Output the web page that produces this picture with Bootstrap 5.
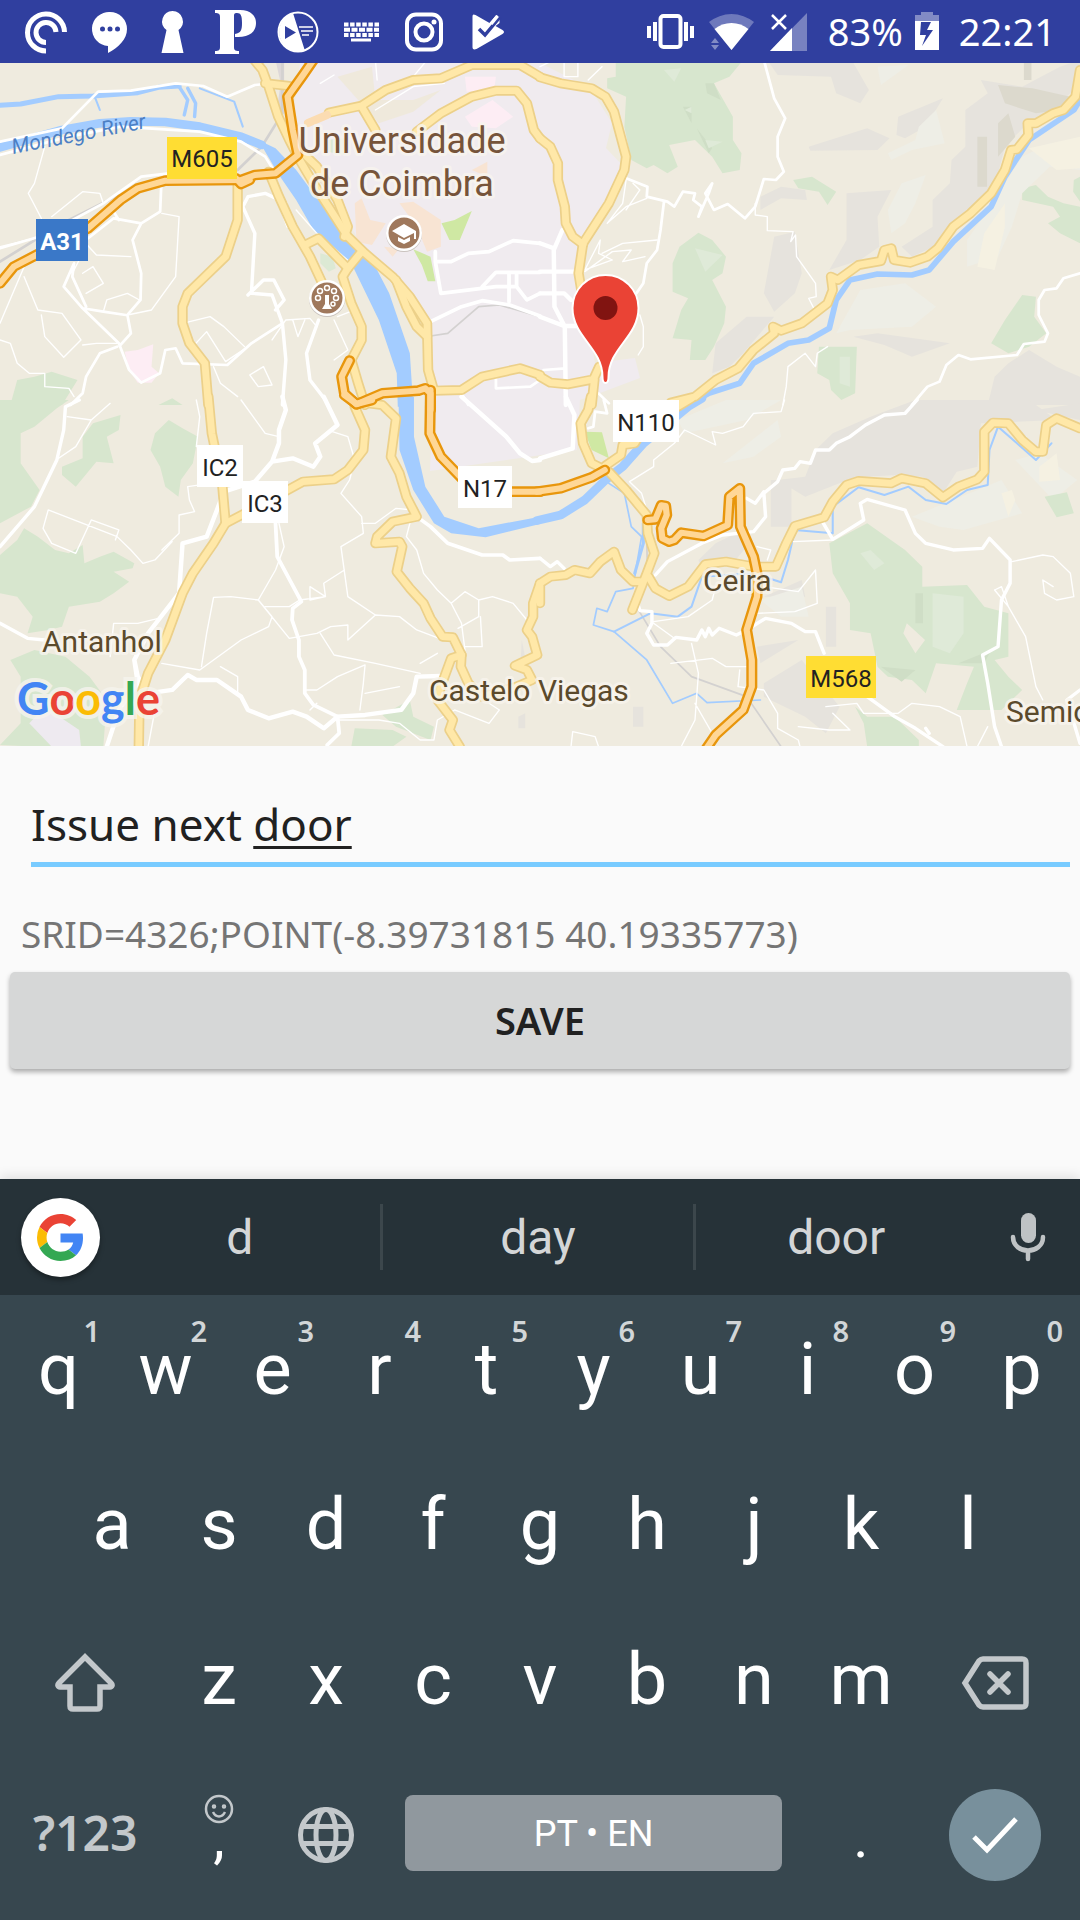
<!DOCTYPE html>
<html lang="en">
<head>
<meta charset="utf-8">
<meta name="viewport" content="width=device-width, initial-scale=1">
<title>New issue</title>
<link href="https://cdn.jsdelivr.net/npm/bootstrap@5.3.0/dist/css/bootstrap.min.css" rel="stylesheet">
<script src="https://cdn.jsdelivr.net/npm/bootstrap@5.3.0/dist/js/bootstrap.bundle.min.js"></script>
<style>
body{background:#fafafa;color:#212121;font-family:"Noto Sans","Open Sans",sans-serif}
.statusbar{background:#303f9f;height:63px;padding:0 24px;color:#fff;font-size:38px;line-height:63px}
.statusbar svg{display:block;fill:#fff}
.map{display:block;width:100%;height:auto;font-family:Roboto,sans-serif}
.issue-form{padding:40px 10px 0}
.issue-field{margin-left:21px;border-bottom:5px solid #78cbff;position:relative}
.issue-field input{display:block;width:100%;border:0;outline:0;background:transparent;padding:0;font-size:44px;line-height:76px;color:#212121}
.spell{position:absolute;left:0;top:0;font-size:44px;line-height:76px;color:transparent;pointer-events:none;white-space:pre}
.spell span{text-decoration:underline 3px #212121;text-underline-offset:5px}
.coords{margin:42px 11px 13px;font-size:37px;line-height:50px;color:#757575}
.btn-save{background:#d6d7d7;color:#212121;border:0;border-radius:5px;height:97px;font-size:38px;font-weight:600;box-shadow:0 3px 5px rgba(0,0,0,.32)}
.keyboard{background:#37474f;font-family:Roboto,sans-serif;box-shadow:0 -2px 12px rgba(0,0,0,.12)}
.suggestions{background:#263238;height:116px}
.suggestions button,.keys button{border:0;background:transparent;padding:0}
.glogo{width:79px;height:79px;margin-left:21px;background:#fff!important;border-radius:50%;box-shadow:0 3px 5px rgba(0,0,0,.35);display:grid;place-items:center}
.word{flex:9 1 0;color:#d4d6d7;font-size:48px;line-height:64px;padding-top:2px!important}
.word.main{flex:10 1 0}
.word+.word{border-left:3px solid #3c474c!important}
.mic{width:104px;display:grid;place-items:center}
.keys{padding:0 5px 5px}
.keyrow{height:155px}
.keys button{flex:2 1 0;min-width:0;height:155px;padding-bottom:6px;color:#fff;font-size:72px;line-height:1;display:flex;align-items:center;justify-content:center;position:relative}
.keys .half{flex:1 1 0}
.keys .wide{flex:3 1 0;color:#c3c8cb}
.keys .space{flex:8 1 0;padding-bottom:10px}
.space span{display:block;width:88%;height:76px;border-radius:8px;background:#90989e;font-size:36px;line-height:78px}
.hint{position:absolute;left:50%;top:18px;margin-left:25px;font:600 29px/36px "Noto Sans",sans-serif;color:#d2d6d8}
.keys .sym{font:600 48px "Noto Sans",sans-serif;padding-bottom:10px}
.keys .low{padding-bottom:0}
.keys .punct{padding-bottom:2px;font-size:58px}
.enter{width:92px;height:92px;border-radius:50%;background:#78909c;display:grid;place-items:center}
.smile{position:absolute;left:50%;top:34px;margin-left:-15px}
/* map drawing */
.map path,.map polyline{stroke-linejoin:round;stroke-linecap:round}
.ln path{fill:none}
.thin{stroke:#fff;stroke-width:4}
.mid{stroke:#fff;stroke-width:8}
.ycase{stroke:#ecd089;stroke-width:30}
.yfill{stroke:#ffe8a8;stroke-width:20}
.ocase{stroke:#e8960c;stroke-width:32}
.ofill{stroke:#ffd796;stroke-width:18}
.river{stroke:#a3ccff}
.river .bank{fill:#a3ccff;stroke:none}
.place{font-size:30px;fill:#5b4a2c;stroke:#f8f5ee;stroke-width:6px;stroke-opacity:.8;paint-order:stroke;stroke-linejoin:round}
.uni{font-size:36px;fill:#76543a;text-anchor:middle}
.shield{font-size:24px;fill:#222;text-anchor:middle}
</style>
</head>
<body class="min-vh-100 d-flex flex-column">
<header class="statusbar d-flex align-items-center justify-content-between">
  <svg width="484" height="63" viewBox="24 0 484 63" role="img" aria-label="Notifications">
    <path d="M46 51A18.500 18.500 0 1 1 64.500 32" fill="none" stroke="#fff" stroke-width="5"/>
    <path d="M46 42.500A10 10 0 1 1 56 32" fill="none" stroke="#fff" stroke-width="5"/>
    <path d="M110 12a17 17 0 0 1 17 17c0 10-8 18-19 24v-7a17 17 0 0 1 2-34z"/>
    <g fill="#303f9f"><circle cx="102.500" cy="29" r="2.500"/><circle cx="110" cy="29" r="2.500"/><circle cx="117.500" cy="29" r="2.500"/></g>
    <path d="M172.500 11a10.500 10.500 0 0 1 6 19l5 23h-22l5-23a10.500 10.500 0 0 1 6-19z"/>
    <path fill-rule="evenodd" d="M215 10h25c11 0 16 6 16 13 0 9-7 15-21 14v-3c6-1 7-4 7-11s-1-10-5-10c-3 0-3 1-3 4v30c0 3 1 4 5 4v3h-24v-3c4 0 5-1 5-4V17c0-3-1-4-5-4z"/>
    <circle cx="298" cy="32" r="19.500" fill="none" stroke="#fff" stroke-width="2"/>
    <path d="M293 13l12 38a19.500 19.500 0 1 1-12-38z"/><path d="M285 26v13l11-6.500z" fill="#303f9f"/>
    <path d="M299 27h14M301 31h12M302 35h7" stroke="#fff" stroke-width="1.500"/>
    <path d="M344 24.500h35M344 35h35" stroke="#fff" stroke-width="4" stroke-dasharray="4.500 1.600"/><path d="M344 29.700h35" stroke="#fff" stroke-width="4" stroke-dasharray="6 1.500"/><path d="M351 40h20" stroke="#fff" stroke-width="3"/>
    <g fill="none" stroke="#fff"><rect x="407" y="14.500" width="34" height="35" rx="9" stroke-width="4"/><circle cx="424" cy="32" r="8.500" stroke-width="4"/></g><circle cx="434" cy="22" r="2.500"/>
    <path d="M472.500 17c0-3 1-3 3-2l14 8 7-8 3 2v6l-4 3 7 4c2 1 2 3 0 4l-26 15c-3 1-4 0-4-2z"/><path d="M479 29l6 6 15-18" fill="none" stroke="#303f9f" stroke-width="3.500"/><path d="M491 24l6.500-8" stroke="#fff" stroke-width="3.500"/>
  </svg>
  <div class="d-flex align-items-center">
  <svg width="163" height="63" viewBox="645 0 163 63" role="img" aria-label="Vibrate, wireless and mobile signal">
    <rect x="660.500" y="16" width="20" height="31" rx="3" fill="none" stroke="#fff" stroke-width="4"/>
    <path d="M647 26h4v12h-4zM653 22h4v19h-4zM684 22h4v19h-4zM690 26h4v12h-4z"/>
    <path d="M709 22a36 36 0 0 1 45 0L731.500 50z" opacity=".3"/><path d="M714.500 29a27 27 0 0 1 34 0L731.500 50z"/>
    <path d="M711 43l4-5 4 5zM711 45l4 5 4-5z" opacity=".4"/>
    <path d="M770 51l37-38v38z" opacity=".35"/><path d="M770 51l22-23v23z"/><path d="M772 15l14 14M786 15l-14 14" stroke="#fff" stroke-width="2.500"/>
  </svg>
  <span class="ms-3 ps-1">83%</span>
  <svg class="ms-2 me-3" width="32" height="63" viewBox="0 0 32 63" role="img" aria-label="Charging"><path d="M4 15h6v-3h12v3h6v7H4z" opacity=".4"/><path fill-rule="evenodd" d="M4 21h24v29H4zM10 22l-1 13h6l-4 11 11-16h-6l4-8z"/></svg>
  <span>22:21</span>
  </div>
</header>

<svg class="map" viewBox="0 0 1080 683" role="img" aria-label="Map of Coimbra">
<rect width="1080" height="683" fill="#efebdf"/>
<defs>
<g id="yellow">
 <g transform="translate(0 -3) scale(.3444 .3333)">
  <path d="M738 0L762 30L780 80L808 170L840 240L870 300L910 370L960 450L1010 530L1060 580L1140 650L1190 710L1240 790L1243 930L1260 992L1340 990L1400 950L1510 925L1568 945"/>
  <path d="M770 70L840 78"/><path d="M1150 660L1180 740L1210 800L1240 830"/>
  <path d="M870 270L920 320L980 420L1010 500L1000 530"/>
  <path d="M780 335L810 410L850 500L900 590L945 690"/><path d="M885 555L925 535L1010 625L1050 575"/><path d="M1010 625L995 650L1020 730L1050 800L1050 840L1020 900L1040 970L1060 1035"/>
  <path d="M690 375L690 480L655 590L545 700L530 740L530 790L550 850L595 910L605 1035"/>
  <path d="M955 158L1050 137L1120 90L1200 60L1280 55L1370 15L1510 15L1568 50"/><path d="M1050 140L1090 210"/>
  <path d="M1210 215L1280 160L1370 110L1440 92L1500 92L1530 130L1550 210L1568 235"/>
 </g>
 <g transform="translate(540 -3) scale(.3444 .3333)">
  <path d="M0 52L60 70L150 85L190 110L215 155L250 290L245 330L200 430L125 550L112 640L120 690"/>
  <path d="M0 235L30 260L52 310L52 360L72 440L75 490L95 530L125 553"/>
  <path d="M0 950L30 968L80 973L155 958L172 920M158 958L150 1035"/>
  <path d="M380 1028L450 1010L510 960L575 925L620 870L680 820L677 800L700 812L760 790L835 730L850 690L845 650L865 660L925 615L990 603L1000 570L1020 565L1028 600L1075 608L1125 590L1155 565L1200 500L1250 460L1310 400L1350 330L1368 270L1385 268L1418 225L1416 190L1440 190L1490 160L1520 150L1555 110L1568 30"/>
 </g>
 <g transform="translate(0 337) scale(.3444 .3333)">
  <path d="M605 -10L615 100L645 250L655 370L620 430L560 520L530 580L480 720L430 820L405 900L403 1040"/>
  <path d="M655 370L720 335L880 245L970 238L1010 210L1055 150L1060 90L1030 20"/>
  <path d="M1070 10L1110 15L1150 55L1135 170L1160 220L1180 290L1210 350L1140 365L1095 410L1090 430L1160 425L1168 440L1152 515L1190 565L1230 610L1250 655L1285 710L1315 712L1340 765L1310 775L1280 860L1270 900L1315 960L1305 990L1335 1040"/><path d="M1340 765L1338 800L1360 850L1400 890L1500 860L1545 840L1530 810L1495 797L1560 765L1545 710L1530 690L1548 650L1548 610L1568 550"/>
 </g>
 <g transform="translate(540 337) scale(.3444 .3333)">
  <path d="M148 -10L140 30L118 70L125 130L150 190L200 215L250 270L310 345L313 400L332 460L310 520L268 630"/>
  <path d="M190 197L235 165L240 135L275 130L290 105L400 20L440 -5"/>
  <path d="M0 550L30 530L75 525L100 510L145 520L175 485L215 455L235 510L270 545L290 545M0 550L0 610"/>
  <path d="M315 530L335 565L375 588L430 560L480 493L540 485L620 500L685 500L715 430L740 378L825 352L850 305L890 255L925 243L1020 250L1050 235L1120 250L1170 292L1215 260L1270 238L1290 215L1290 95L1315 68L1360 70L1400 120L1440 155L1460 155L1470 75L1500 55L1568 85"/>
 </g>
</g>
<g id="orange">
 <g transform="translate(0 -3) scale(.3444 .3333)">
  <path d="M910 0L880 45L835 110L850 210L865 285L800 340L740 345L700 360L480 362L400 385L350 420L256 505L105 585L40 620L0 670"/><path d="M685 355L700 372L725 360"/>
  <path d="M1015 902L992 950L1000 1000L1035 1033L1110 1000L1215 992L1235 985L1250 1000L1250 1050"/>
 </g>
 <g transform="translate(0 337) scale(.3444 .3333)"><path d="M1000 -15L1035 12L1080 0"/><path d="M1250 -30L1248 100L1280 170L1350 245L1450 275L1568 275"/></g>
 <g transform="translate(540 337) scale(.3444 .3333)">
  <path d="M-10 275L60 265L150 232L188 210"/>
  <path d="M313 360L335 358L352 316L365 318L368 345L352 385L355 415L375 425L390 420L410 398L475 408L545 375L550 290L580 265L582 380L620 470L632 530L630 590L600 690L615 780L615 860L590 930L510 1005L480 1050"/>
 </g>
</g>
</defs>

<!-- built-up area -->
<g fill="#f0ebef">
 <path d="M300 0H540L590 25L612 60L606 85L625 105L585 185L580 215L595 300L635 295L640 315L600 330L580 337L577 387L430 408L433 330L430 267L370 195L330 130L292 60z"/>
</g>
<!-- woodland -->
<g transform="translate(540 -3) scale(.3444 .3333)"><path fill="#d7e6ce" d="M220 0H590L550 50L505 70L560 170L560 240L585 280L580 330L530 340L500 290L450 240L375 255L400 320L370 340L330 315L310 325L265 300L245 200L250 110L195 85L195 55L220 50zM460 518L500 540L540 590L530 640L500 660L540 740L535 790L505 860L480 900L435 900L440 840L385 835L410 750L430 715L385 695L385 610L405 560zM735 360L790 350L860 395L835 435L810 395L750 385zM1400 385L1440 375L1475 410L1520 430L1568 440V550L1510 520L1475 490L1510 470L1490 440L1400 420zM1550 360l18-10v75l-20-30zM1400 705L1440 710L1435 770L1470 820L1420 860L1360 880L1310 850L1350 780zM810 860L920 860L915 1000L875 1020L845 990L840 960L805 940z"/>
 <g fill="#e6e3dd"><path d="M660 0H905L955 90L930 130L860 100L845 50L690 45zM1040 170L1170 115L1120 200L1060 235L1035 225zM780 260L950 205L1015 235L980 270L785 272zM640 410L700 380L770 390L775 420L700 415L640 450zM1235 150L1300 100L1280 60L1400 80L1510 20L1568 0V70L1500 140L1420 185L1350 260L1320 380L1195 495L1155 555L1080 590L1050 560L1140 500L1140 420L1190 370L1195 300L1235 260zM680 530L740 515L760 640L740 700L680 755L650 700zM890 400L1020 390L980 470L985 560L930 600L840 630L890 540zM510 850L600 770L680 770L590 880L550 920L500 940zM910 830L980 820L1190 850L1080 890L1000 855zM1360 910L1420 870L1500 920L1568 950V1035H1300L1320 950z"/></g>
 <g fill="#dcd9cd"><path d="M1330 75L1430 85L1540 110L1510 150L1440 160L1350 130zM1405 0h22v60h-22zM1330 190L1360 160L1380 230L1330 290zM1270 230h28v150h-28z"/></g>
 <g fill="#eeeee6"><path d="M980 20L1070 15L990 75zM1100 200L1150 150L1175 250L1080 270L1020 300L1010 280L1090 240zM1050 370L1120 345L1090 430L1060 490L1020 520L1010 450zM860 820L930 690L1060 670L1150 740L1080 800L900 810zM1400 290L1480 250L1568 270V330L1480 320L1400 400L1370 500L1330 590L1240 620L1240 540L1300 450z"/><path fill="#f5f1e2" d="M1420 265L1568 230V325L1500 330zM1290 520L1350 430L1350 500L1320 630L1270 620z"/></g>
 <g fill="#cfdec6"><path d="M455 205l45 60-10 15zM480 70h25l20 50-40 -20zM415 140h25v50z"/></g>
 <g fill="#dfead8"><path d="M360 30l50-5-20 40zM480 240l50 5-40 20zM450 565l80 20-50 50zM420 150l20-10v20zM870 890h30v90l-30-10z"/></g>
</g>
<g transform="translate(0 -3) scale(.3444 .3333)">
 <path fill="#d7e6ce" d="M30 1035L50 960L100 950L150 935L225 960L180 1035zM460 1035l40-20 30 20z"/>
 <path fill="#dce9d4" d="M930 580l35 10 10 35-20 10-25-25zM950 240l50-5v50l-50-10z"/>
 <path fill="#cfe8a3" d="M1282 490L1320 480L1370 453L1335 540H1305zM1200 568L1250 590L1264 664H1242L1225 615z"/>
 <path fill="#fdedf4" d="M362 875L400 870L445 853L440 920L462 940L440 968H400L375 930zM1350 50h90l-5 40-80 5zM1350 170L1430 120L1490 170L1440 205L1370 200z"/>
 <path fill="#f8e4d3" d="M1030 430L1050 415L1075 480L1120 490L1080 555L1035 545zM1160 430L1200 425L1280 480V560L1240 575L1210 500zM1370 330L1415 305V350zM1115 560L1160 565L1140 590z"/>
 <path fill="#efe9dc" d="M980 50L1080 20L1090 120L1200 120L1280 90L1200 155L1100 190z"/>
 <g fill="#ddd8d8"><path d="M800 0h25v60l-5 110-15-30 10-70z"/></g>
</g>
<g transform="translate(0 337) scale(.3444 .3333)"><path fill="#d7e6ce" d="M0 0L200 0L165 25L100 80L60 100V190L115 270L90 320L0 370zM240 110L270 70L350 45L345 90L310 110L330 190L280 185L220 260L180 225V200L240 175zM490 60L530 85L575 110L560 190L525 240L518 290L480 260L465 200L437 150L450 100zM0 465L50 420L70 385L110 410L160 450L200 460L240 435L245 490L290 470L330 455L390 490L385 505L330 515L375 545L330 580L290 605L200 620L180 680L140 690L80 700L95 650L50 590L0 580zM30 780L100 750L190 770L260 830L310 900L300 1040H100L0 1035L60 970V830zM1110 945L1190 900L1200 950L1260 980L1250 1020L1150 980zM1030 985L1140 990L1180 1010L1140 1040H1020z"/><path fill="#eeeaf0" d="M85 970L130 920L230 990L235 1040H150z"/><path fill="#e6e3dd" d="M1515 720l15 80-20 20zM1505 950l20-10v45h-20z"/></g>
<g transform="translate(540 337) scale(.3444 .3333)">
 <g fill="#e6e3dd"><path d="M690 240L770 230L800 150L850 100L960 50L1090 0H1420L1500 60L1280 70L1270 200L1210 215L1170 280L1110 230L1040 225L940 230L880 245L770 290zM1440 30L1568 10V60L1500 45zM670 240h60v140h-60zM460 480L510 430L570 400L600 440L560 490L470 510zM650 590L760 540L770 590zM630 740L750 720L640 790zM650 850L760 780L870 920L830 1000L770 950L650 890zM830 620h30v120h-30zM270 920h30v60h-30z"/></g>
 <g fill="#eeeee6"><path d="M420 100L600 60L700 0H540L400 60zM530 190L690 60L700 110L620 170zM1080 350L1200 300L1340 240L1400 340L1230 390L1160 380zM1380 180L1450 160L1560 240L1490 300zM640 600L760 560L780 650L700 650z"/><path fill="#f5f1e2" d="M1340 280l30-10 10 30-20 50zM1450 200l50-40 10 80-60 5z"/></g>
 <path fill="#d7e6ce" d="M840 430L950 370L1060 450L1110 500V560L1240 555L1290 620L1360 640V770L1320 780L1360 830L1400 870L1340 930H1210L1240 850L1260 800L1150 790L1120 880L1080 840L1010 830L980 800L960 700L900 690V610L850 520zM1065 670L1055 700L1090 760L1118 720zM1465 290L1530 277L1550 340L1500 352zM915 920L950 950L1030 950L1100 1020V1040H950L940 970z"/>
 <path fill="#cfdec6" d="M1090 580h22v90h-22zM1215 790L1310 750L1290 790zM990 800L1090 810L1050 845z"/><path fill="#dfead8" d="M1140 580L1230 590V700L1190 760L1140 740zM930 460l30-10 40 40-30 20z"/>
 <path fill="#cfe8a3" d="M130 95L180 97L200 175L150 150z"/>
</g>

<!-- rails -->
<g class="ln" fill="none" stroke="#d3d1d0" stroke-width="5">
 <g transform="translate(0 -3) scale(.3444 .3333)"><path d="M820 0V160L760 260L690 330M345 405L180 490L0 605" stroke-width="8"/><path d="M1250 828L1300 820L1390 740L1450 735L1568 770"/></g>
 <g transform="translate(540 337) scale(.3444 .3333)"><path d="M310 420L312 520L280 620L350 740L440 830L600 890L700 1040"/></g>
</g>

<!-- water -->
<g class="ln river" fill="none">
 <g transform="translate(0 -3) scale(.3444 .3333)">
  <path d="M0 262L180 210L290 190L380 184L480 186L580 200L700 230L760 255" stroke-width="26"/>
  <path d="M0 136L60 132L170 110L270 108L400 98L460 82L520 78" stroke-width="15"/><path d="M520 80L545 120L535 165M545 85L568 130L565 170" stroke-width="10"/><path d="M580 85L680 125L705 200M275 110L290 150" stroke-width="6"/>
  <path class="bank" d="M750 240L800 265L860 330L1010 540L1040 580L1090 620L1130 700L1190 880L1200 1040H1155L1152 940L1100 780L1020 610L960 570L910 510L860 420L810 345z"/>
 </g>
 <g transform="translate(0 337) scale(.3444 .3333)"><path class="bank" d="M1157 -10H1202V110L1235 260L1290 350L1390 385L1568 350V372L1410 412L1310 400L1260 370L1200 270L1160 150z"/></g>
 <g transform="translate(540 337) scale(.3444 .3333)">
  <path d="M-10 362L60 345L130 300L190 240L240 200L300 130L430 20L470 -5" stroke-width="26"/>
  <path d="M200 250L245 280L265 380L295 410L280 500L270 565L220 575L195 635L165 625L155 675L215 695L310 780L385 910L455 880L485 908L640 900" stroke-width="5"/><path d="M300 370V430L275 520" stroke-width="9"/>
  <path d="M215 695L320 640L400 650L440 620L470 530L620 520L700 547L720 480L740 390L850 400V320L925 262L1000 285L1070 260L1120 300L1180 312L1240 270L1300 255L1305 150L1330 80L1440 180L1485 130" stroke-width="6"/>
 </g>
 <g transform="translate(540 -3) scale(.3444 .3333)"><path d="M430 1035L490 1000L580 970L620 910L720 850L780 840L840 805L860 720L900 660L980 642L1080 645L1130 630L1200 545L1310 440L1350 350L1420 240L1550 150L1568 120" stroke-width="17"/></g>
</g>

<!-- local roads -->
<g class="ln thin" fill="none">
 <g transform="translate(0 -3) scale(.3444 .3333)">
  <path d="M130 260L100 370L82 400L120 475M470 460L520 470L510 650L440 750L370 765M240 540L280 585L380 590M150 470L240 395L290 400L300 430M0 560L120 530M70 620L0 790M70 650L110 750L180 760L235 840L185 892L130 830L120 765M300 755L310 720L370 700L405 720M0 840L30 850L50 910L85 940H130V980L200 985L215 1010M230 600L210 640M240 640L270 620L300 670L250 700M240 855L280 850H340M530 790L610 770L650 800L710 860M560 860L600 815L655 905L720 860M620 920L640 970L690 1010M725 945L765 920L790 975L750 980zM790 840L830 780L900 775L920 800M850 780L865 830L885 780M970 780L1010 870L970 900M980 770L1030 750M1090 150L1200 80L1290 70M1090 0L1095 60M1200 50L1240 0M930 70L970 45M860 450L920 520L1020 610"/>
 </g>
 <g transform="translate(540 -3) scale(.3444 .3333)">
  <path d="M250 360L240 430L195 490L250 440L310 415M270 370L290 390L250 450M130 630L175 540L170 580L210 600L130 630M180 580L240 550L340 540M130 635L210 575L265 570L240 605L305 590M290 765L300 800V860L285 885M625 430V465L660 470V512L735 515L728 545L742 525L745 590L800 670L802 710L780 715L795 745M835 860L805 880L800 920L770 880L720 920L715 980L705 1035M0 20L60 -10M70 0V50H110V10M140 60L180 20"/>
 </g>
 <g transform="translate(0 337) scale(.3444 .3333)">
  <path d="M195 50L265 60L320 10M265 60L220 140L170 175M570 0L580 50L570 140M700 0L770 100L810 110M965 95L1010 110L1030 180L1015 240L990 280L1050 350L1055 400L990 440L1000 515L1010 590L1090 645L1160 650L1210 690L1275 715M1050 370H1090L1150 325L1200 330M610 250L545 260L550 300L565 335L520 345V400L470 450M140 330L340 410L380 450L415 490L450 480L500 425M140 330L125 385L150 430L220 460L265 360L345 390L335 420M810 370L825 440L800 510L750 600L670 590L620 592L600 700L585 800M750 600L790 650L780 680L700 720L580 810L470 790M750 600L840 715L920 700L960 680L1010 675V720L1090 645M1000 510L940 550L945 590L900 600V560L945 590L870 600L840 620H770M930 700L970 765L1090 790L1220 820M1060 795L980 830L920 870H890M1060 795L1055 850L1045 930M640 800L690 830V880M1190 370L1180 410L1210 450L1230 520L1270 570L1310 610L1340 670L1350 750M1310 610L1350 575L1390 600L1430 590L1490 610L1530 660M1390 600V650L1330 685M1395 650L1400 740H1350M1270 760L1220 790M970 960L1100 960L1160 970L1220 1020L1260 1020L1270 960L1320 930L1420 970L1450 930L1420 910M320 770L330 670L400 670L460 655M450 930L430 1040M900 930L920 910M1060 880L1160 860"/>
 </g>
 <g transform="translate(540 337) scale(.3444 .3333)">
  <path d="M260 245L330 200L330 180L390 130L420 90L510 135L500 95L530 100L590 80L620 40L700 35L710 0M260 245L295 280L310 330M735 425L850 420M650 560L750 575L800 510L805 610L740 635L630 640M330 665L430 650L500 600L510 560M330 670L390 715M440 730L460 820L450 960L410 1040M380 790L500 775L540 800H600M580 810L575 860L650 870L690 940L690 985L750 1020L755 1040M450 910L500 1000M90 1040L95 995L160 1010L170 1040M830 920L920 910L940 940L1040 940L1080 910L1160 920L1220 950L1240 1040M850 940L900 990H840L750 980M1370 485L1460 465L1490 470L1540 520L1550 590L1500 600L1465 580L1460 540L1490 560M1320 570L1360 620L1410 710L1440 860L1460 900M1320 570L1340 560L1360 620M630 440L670 450L660 480M1270 1040L1300 980"/>
 </g>
</g>
<g class="ln mid" fill="none">
 <g transform="translate(0 -3) scale(.3444 .3333)">
  <path d="M0 245L180 205L285 95L380 92L510 70L590 78L660 110L740 75L770 72M0 285L200 230L350 200L580 215L700 245L770 290L800 340M0 565L130 525L300 430L410 350L490 340M256 535L330 475L410 490L465 455L468 380M330 455L345 480M410 490L385 540L410 640L408 720L370 765L380 820L350 855M215 610L185 680L240 745L345 850L375 930L410 968L465 940L480 870L510 865L530 910L660 915L730 850L820 790M240 745L300 755L365 765M215 610L210 650L250 740M340 860L290 880L250 950L240 1000L205 1035"/>
  <path stroke-width="10" d="M830 430L770 400L720 410L705 440L740 520L730 700L790 705L820 790L830 900L820 1035M720 705L765 660L795 660L825 720L800 750M925 780L890 880L900 960L945 1020"/>
  <path d="M790 370L835 500M1440 950V985L1540 980L1568 960M1340 1000L1360 1035"/><path stroke-width="11" d="M1264 575V605L1310 605L1360 580L1420 575L1490 542L1568 550M1264 605L1280 700L1440 680H1500V640M1400 680L1440 637H1568M1478 640V725M1500 680L1530 720L1568 700M1250 785L1340 740L1400 722L1480 735L1568 768"/>
 </g>
 <g transform="translate(540 -3) scale(.3444 .3333)">
  <path d="M650 0L680 115L712 175L690 230L690 290L708 335L685 360L650 357L625 440L595 475L545 432L505 450L480 400L500 370L490 400L460 470L470 440L445 420L450 400L415 395L390 440L370 425L310 410L312 380L250 355M360 425L350 510L340 570L310 610L300 670L280 700"/>
  <path stroke-width="13" d="M65 510L40 570L42 740L72 800L75 1035M0 550L40 565M0 635H100M0 700H70L90 720M0 770L70 798H120"/><path d="M10 930L75 925"/><path d="M1568 640L1520 655L1500 685L1465 690L1448 720V765L1475 820L1465 845L1405 852L1385 885L1250 898L1215 885L1180 915L1160 965L1125 980L1080 1035"/>
 </g>
 <g transform="translate(0 337) scale(.3444 .3333)">
  <path stroke-width="10" d="M230 0L190 20L185 90L165 180L100 320L0 440M0 670L80 715L130 720"/>
  <path stroke-width="13" d="M820 -10L830 30L810 90V130L790 185L740 245L650 275L630 330L600 410L530 430L520 580L430 700L390 780L400 830L430 880L500 870L545 825L570 840H630L700 890L720 930L780 955L850 935L890 950L940 985L980 950L1060 945L1165 930L1200 880L1210 830L1280 828M790 185L850 175L910 200L930 170L915 130L980 75L940 -10M390 780L400 850L345 930L310 1040"/>
  <path d="M800 370L805 470L875 605L850 625L848 660L868 720V770L885 810V880L910 915L980 950L985 1000L950 1035M1210 350L1250 380L1300 430L1400 465H1460L1480 480L1568 475" stroke-width="11"/>
  <path stroke-width="13" d="M1340 -10L1470 110L1510 160L1545 183L1568 180"/>
 </g>
 <g transform="translate(540 337) scale(.3444 .3333)">
  <path stroke-width="13" d="M75 -10L100 45L95 145L0 175"/><path d="M185 0L195 40L160 35L155 80L140 85M200 10L170 -20"/>
  <path stroke-width="10" d="M1095 0L1060 40L1000 45L945 75L900 110L860 130L840 150H800L785 190L755 185L740 205L705 210L690 245L650 280L655 350L620 395L530 405L470 430L370 485L335 525M600 295L625 310L650 275M820 365L850 418L940 360L930 310L950 298L1060 330L1090 400L1120 430L1200 450L1285 445L1305 415L1365 480V550L1340 600L1330 740L1285 765L1300 850L1320 980L1340 1040M0 475L30 500L50 485L70 505"/>
  <path stroke-width="10" d="M285 615L290 632L325 635L325 670L310 700L330 735H370L395 712L455 720L470 690L480 710L490 685L500 705L520 685L570 705L600 690L655 655L730 670L770 695H800L825 760M950 890L1030 950L1090 985L1170 1040M1120 985L1130 1000M1568 870L1530 900L1568 1030"/>
 </g>
</g>

<g class="ln" fill="none"><use href="#yellow" class="ycase"/><use href="#yellow" class="yfill"/><use href="#orange" class="ocase"/><use href="#orange" class="ofill"/></g>
<path d="M308 60L327 52" stroke="#fbdcb2" stroke-width="8"/>

<!-- places of interest -->
<g><circle cx="404" cy="171" r="18" fill="#c9c2bd"/><circle cx="404" cy="170" r="18" fill="#fff"/><circle cx="404" cy="170" r="15.500" fill="#9f785c"/><path fill="#fff" d="M392 168l12-7 12 7v8h-2v-6l-10 5zM398 174l6 3 6-3v4l-6 3-6-3z"/></g>
<g><circle cx="327" cy="236" r="18" fill="#c9c2bd"/><circle cx="327" cy="235" r="18" fill="#fff"/><circle cx="327" cy="235" r="15.500" fill="#9f785c"/><g fill="none" stroke="#fff" stroke-width="1.500"><circle cx="318" cy="235" r="2.500"/><circle cx="320" cy="228" r="2.500"/><circle cx="327" cy="225" r="2.500"/><circle cx="334" cy="228" r="2.500"/><circle cx="336" cy="235" r="2.500"/><circle cx="333" cy="241" r="2"/></g><path fill="#fff" d="M325 232h4v9l3 5h-10l3-5z"/></g>

<!-- marker -->
<path d="M605.500 320c-2 0-3-2-3-6 0-29-30-40-30-69a33 33 0 0 1 66 0c0 29-30 40-30 69 0 4-1 6-3 6z" fill="#ea4335" stroke="#fff" stroke-width="2"/><circle cx="605.500" cy="245" r="12" fill="#811411"/>

<!-- road shields -->
<path fill="#fd3" d="M167 74h70v42h-70zM806 593h70v42h-70z"/><path fill="#3a78c8" d="M36 156h52v42H36z"/><path fill="#fff" d="M197 382h46v42h-46zM242 418h46v42h-46zM458 403h54v42h-54zM613 337h66v42h-66z"/>
<g class="shield"><text x="202" y="104">M605</text><text x="62" y="187" fill="#fff" font-weight="700">A31</text><text x="220" y="413">IC2</text><text x="265" y="449">IC3</text><text x="485" y="434">N17</text><text x="646" y="368">N110</text><text x="841" y="624">M568</text></g>

<!-- names -->
<g class="place"><g class="uni"><text x="402" y="90">Universidade</text><text x="402" y="133">de Coimbra</text></g>
<text x="42" y="589">Antanhol</text><text x="429" y="638">Castelo Viegas</text><text x="703" y="528">Ceira</text><text x="1006" y="659">Semide</text></g>
<text transform="translate(13 91) rotate(-11)" font-size="21" font-style="italic" fill="#4c7fc4">Mondego River</text>
<text x="17" y="652" font-family="Lato,sans-serif" font-weight="700" font-size="45" stroke="#f6f4ee" stroke-opacity=".8" stroke-width="8" paint-order="stroke" fill="#4285f4">G<tspan fill="#ea4335">o</tspan><tspan fill="#fbbc05">o</tspan>g<tspan fill="#34a853">l</tspan><tspan fill="#ea4335">e</tspan></text>
</svg>

<form class="issue-form">
  <div class="issue-field"><input type="text" value="Issue next door" aria-label="Issue title" spellcheck="false"><div class="spell" aria-hidden="true">Issue next <span>door</span></div></div>
  <p class="coords">SRID=4326;POINT(-8.39731815 40.19335773)</p>
  <button type="button" class="btn btn-save w-100">SAVE</button>
</form>

<section class="keyboard mt-auto" aria-label="Keyboard">
  <div class="suggestions d-flex align-items-center">
    <button class="glogo" aria-label="Google"><svg width="47" height="47" viewBox="0 0 48 48"><path fill="#EA4335" d="M24 9.500c3.540 0 6.710 1.220 9.210 3.600l6.850-6.850C35.900 2.380 30.470 0 24 0 14.620 0 6.510 5.380 2.560 13.220l7.980 6.190C12.430 13.720 17.740 9.500 24 9.500z"/><path fill="#4285F4" d="M46.980 24.550c0-1.570-.15-3.090-.38-4.550H24v9.020h12.940c-.58 2.960-2.260 5.480-4.780 7.180l7.730 6c4.510-4.180 7.090-10.360 7.090-17.650z"/><path fill="#FBBC05" d="M10.530 28.590A14.500 14.500 0 0 1 9.770 24c0-1.600.27-3.140.76-4.590l-7.980-6.190A24 24 0 0 0 0 24c0 3.880.92 7.540 2.560 10.780z"/><path fill="#34A853" d="M24 48c6.480 0 11.930-2.130 15.890-5.810l-7.730-6c-2.150 1.450-4.920 2.300-8.160 2.300-6.260 0-11.570-4.220-13.470-9.910l-7.980 6.190C6.510 42.620 14.620 48 24 48z"/></svg></button>
    <div class="d-flex flex-grow-1"><button class="word">d</button><button class="word main">day</button><button class="word">door</button></div>
    <button class="mic" aria-label="Voice input"><svg width="36" height="50" viewBox="0 0 36 50" fill="#bfc3c5"><rect x="11" y="1" width="15" height="30" rx="7.500"/><path d="M3 25c0 18 30 18 30 0M18 39v8" fill="none" stroke="#bfc3c5" stroke-width="4.500" stroke-linecap="round"/></svg></button>
  </div>
  <div class="keys">
    <div class="keyrow d-flex"><button>q<span class="hint">1</span></button><button>w<span class="hint">2</span></button><button>e<span class="hint">3</span></button><button>r<span class="hint">4</span></button><button>t<span class="hint">5</span></button><button>y<span class="hint">6</span></button><button>u<span class="hint">7</span></button><button>i<span class="hint">8</span></button><button>o<span class="hint">9</span></button><button>p<span class="hint">0</span></button></div>
    <div class="keyrow d-flex"><div class="half"></div><button>a</button><button>s</button><button>d</button><button>f</button><button>g</button><button>h</button><button>j</button><button>k</button><button>l</button><div class="half"></div></div>
    <div class="keyrow d-flex"><button class="wide low" aria-label="Shift"><svg width="60" height="60" viewBox="0 0 60 60" fill="none" stroke="#c3c8cb" stroke-width="5.500"><path d="M30 4L4 30c-2 2-1 4 1 4h10v19c0 2 1 3 3 3h24c2 0 3-1 3-3V34h10c2 0 3-2 1-4z"/></svg></button><button>z</button><button>x</button><button>c</button><button>v</button><button>b</button><button>n</button><button>m</button><button class="wide low" aria-label="Backspace"><svg width="68" height="56" viewBox="0 0 68 56" fill="none" stroke="#c3c8cb" stroke-width="5.500" stroke-linecap="round"><path d="M22 4h39c3 0 4 1 4 4v40c0 3-1 4-4 4H22c-2 0-3-1-4-2L4 28 18 6c1-1 2-2 4-2zM29 19l18 18M47 19L29 37"/></svg></button></div>
    <div class="keyrow d-flex"><button class="wide sym">?123</button><button class="punct" aria-label="Comma or emoji"><svg class="smile" width="30" height="30" viewBox="0 0 30 30" fill="none" stroke="#c3c8cb" stroke-width="2.500"><circle cx="15" cy="15" r="13"/><path d="M9 18c3 6 9 6 12 0"/><circle cx="10" cy="12.500" r="1"/><circle cx="20" cy="12.500" r="1"/></svg>,</button><button aria-label="Change language"><svg width="58" height="58" viewBox="0 0 58 58" fill="none" stroke="#c3c8cb" stroke-width="5"><circle cx="29" cy="29" r="25.500"/><ellipse cx="29" cy="29" rx="10" ry="25.500"/><path d="M5 20.500h48M5 37.500h48"/></svg></button><button class="space" aria-label="Space"><span>PT • EN</span></button><button class="punct">.</button><button class="wide" aria-label="Done"><span class="enter"><svg width="48" height="40" viewBox="0 0 48 40"><path d="M3 22l13 13L45 4" fill="none" stroke="#fff" stroke-width="5"/></svg></span></button></div>
  </div>
</section>
</body>
</html>
